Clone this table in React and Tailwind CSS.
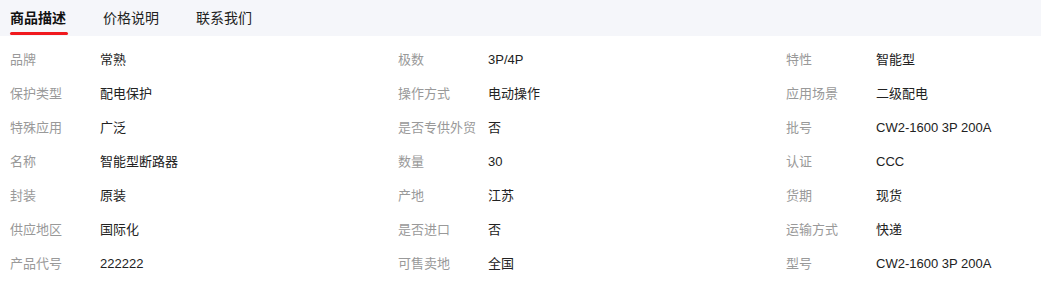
import React from "react";

const rows = [
  [["品牌", "常熟"], ["极数", "3P/4P"], ["特性", "智能型"]],
  [["保护类型", "配电保护"], ["操作方式", "电动操作"], ["应用场景", "二级配电"]],
  [["特殊应用", "广泛"], ["是否专供外贸", "否"], ["批号", "CW2-1600 3P 200A"]],
  [["名称", "智能型断路器"], ["数量", "30"], ["认证", "CCC"]],
  [["封装", "原装"], ["产地", "江苏"], ["货期", "现货"]],
  [["供应地区", "国际化"], ["是否进口", "否"], ["运输方式", "快递"]],
  [["产品代号", "222222"], ["可售卖地", "全国"], ["型号", "CW2-1600 3P 200A"]],
];

export default function App() {
  return (
    <div
      className="w-[1041px] h-[298px] bg-white"
      style={{ fontFamily: '"Liberation Sans", "Noto Sans CJK SC", sans-serif' }}
    >
      <div className="h-[36px] bg-[#f5f6fa] flex items-stretch pl-[10px] gap-[37px]">
        <div className="relative flex items-center text-[14px] font-bold text-[#111]">
          商品描述
          <div className="absolute left-0 right-[-2px] bottom-[1px] h-[3px] rounded-full bg-[#f0191e]" />
        </div>
        <div className="flex items-center text-[14px] text-[#222]">价格说明</div>
        <div className="flex items-center text-[14px] text-[#222]">联系我们</div>
      </div>
      <div className="pt-[7px] pl-[10px]">
        {rows.map((row, i) => (
          <div key={i} className="grid grid-cols-[388px_388px_1fr] h-[34px] items-center">
            {row.map(([k, v], j) => (
              <div key={j} className="flex items-center text-[13px]">
                <span className="w-[90px] shrink-0 text-[#999]">{k}</span>
                <span className="text-[#222]">{v}</span>
              </div>
            ))}
          </div>
        ))}
      </div>
    </div>
  );
}
